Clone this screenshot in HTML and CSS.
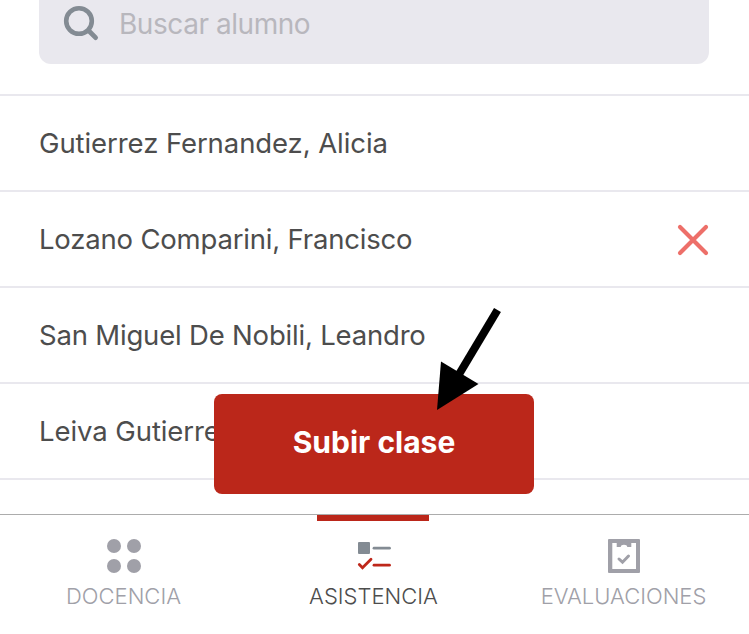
FILE: index.html
```html
<!DOCTYPE html>
<html lang="es">
<head>
<meta charset="utf-8">
<title>Asistencia</title>
<link rel="stylesheet" href="styles.css">
</head>
<body>
<div class="app">
  <main class="content">
    <div class="search">
      <svg class="search-icon" width="36" height="36" viewBox="0 0 36 36"><circle cx="16" cy="16" r="12.800" fill="none" stroke="#838b93" stroke-width="4.600"/><path d="M25.500 25.500 32.600 32.600" stroke="#838b93" stroke-width="4.800" stroke-linecap="round"/></svg>
      <span class="placeholder">Buscar alumno</span>
    </div>
    <ul class="students">
      <li class="student"><span class="name">Gutierrez Fernandez, Alicia</span></li>
      <li class="student"><span class="name tight">Lozano Comparini, Francisco</span>
        <svg width="32" height="32" viewBox="0 0 32 32"><path d="M3 3 29 29M29 3 3 29" stroke="#ed6f69" stroke-width="4.200" stroke-linecap="round"/></svg>
      </li>
      <li class="student"><span class="name tight">San Miguel De Nobili, Leandro</span></li>
      <li class="student"><span class="name">Leiva Gutierrez</span></li>
    </ul>
  </main>
  <button class="upload">Subir clase</button>
  <svg class="arrow" width="75" height="110" viewBox="0 0 75 110"><path d="M67.500 5 28 71" stroke="#000" stroke-width="8"/><path d="M7 105 11 56.500 48.500 79Z"/></svg>
  <nav class="tabs">
    <a class="tab">
      <svg width="36" height="36" viewBox="0 0 36 36" fill="#a0a0a8"><circle cx="8" cy="8" r="7"/><circle cx="28" cy="8" r="7"/><circle cx="8" cy="28" r="7"/><circle cx="28" cy="28" r="7"/></svg>
      <span class="label">DOCENCIA</span>
    </a>
    <a class="tab active">
      <svg width="36" height="36" viewBox="0 0 36 36" fill="none" stroke-linecap="round"><rect x="2" y="4" width="12" height="12" rx="1" fill="#838b93"/><path d="M18 10.200H33.500" stroke="#838b93" stroke-width="2.800"/><path d="M18 27.200H33.500" stroke="#be271a" stroke-width="2.800"/><path d="M3.300 26.500 6.500 29.800 15 21.200" stroke="#be271a" stroke-width="2.800"/></svg>
      <span class="label">ASISTENCIA</span>
    </a>
    <a class="tab">
      <svg width="36" height="36" viewBox="0 0 36 36"><path fill="#a0a0a8" fill-rule="evenodd" d="M3 1H33Q34 1 34 2V34Q34 35 33 35H3Q2 35 2 34V2Q2 1 3 1ZM6.300 5V31H30V5H25.300V9H21.300Q21 6.800 18 6.800T14.700 9H10.700V5Z"/><path d="M13 21 16.500 24.200 22.500 18" fill="none" stroke="#a0a0a8" stroke-width="3" stroke-linecap="round"/></svg>
      <span class="label">EVALUACIONES</span>
    </a>
  </nav>
</div>
</body>
</html>
```
FILE: styles.css
```css
* { box-sizing: border-box; }
body {
  margin: 0;
  background: #fff;
  font-family: Inter, "Liberation Sans", sans-serif;
}
.app {
  position: relative;
  display: flex;
  flex-direction: column;
  height: 634px;
  overflow: hidden;
}
.content { flex: 1; min-height: 0; }
.search {
  display: flex;
  align-items: center;
  gap: 20px;
  height: 64px;
  margin: 0 40px 30px 39px;
  padding: 0 24px 18px;
  border-radius: 0 0 12px 12px;
  background: #e9e8ee;
}
.search-icon { flex: none; }
.placeholder {
  padding-top: 2px;
  font-size: 28px;
  line-height: 34px;
  color: #b8b7bd;
  letter-spacing: -0.45px;
}
.students {
  margin: 0;
  padding: 0;
  list-style: none;
  border-top: 2px solid #e9e8ee;
}
.student {
  display: flex;
  align-items: center;
  justify-content: space-between;
  height: 96px;
  padding: 2px 40px 0 39px;
  border-bottom: 2px solid #e9e8ee;
}
.name {
  padding-bottom: 2px;
  font-size: 27.5px;
  line-height: 34px;
  color: #4d4d4d;
  letter-spacing: -0.08px;
  white-space: nowrap;
}
.name.tight { letter-spacing: -0.19px; }
.upload {
  position: absolute;
  left: 214px;
  top: 394px;
  width: 320px;
  height: 100px;
  padding: 0 0 4px;
  border: 0;
  border-radius: 8px;
  background: #bb271a;
  color: #fff;
  font: 700 30px/36px Inter, "Liberation Sans", sans-serif;
}
.arrow { position: absolute; left: 430px; top: 305px; }
.tabs {
  display: grid;
  grid-template-columns: repeat(3, 250px);
  flex: none;
  height: 120px;
  margin-left: -1px;
  border-top: 1px solid #acacac;
  background: #fff;
}
.tab {
  display: flex;
  flex-direction: column;
  align-items: center;
  gap: 9px;
  padding: 23px 0 0;
  color: #a0a0a8;
}
.tab.active {
  color: #4d4d4d;
  background: linear-gradient(#bb271a, #bb271a) 68px 0 / 112px 6px no-repeat;
}
.label {
  margin-left: -1px;
  font-size: 22px;
  line-height: 26px;
  font-weight: 350;
}
```
